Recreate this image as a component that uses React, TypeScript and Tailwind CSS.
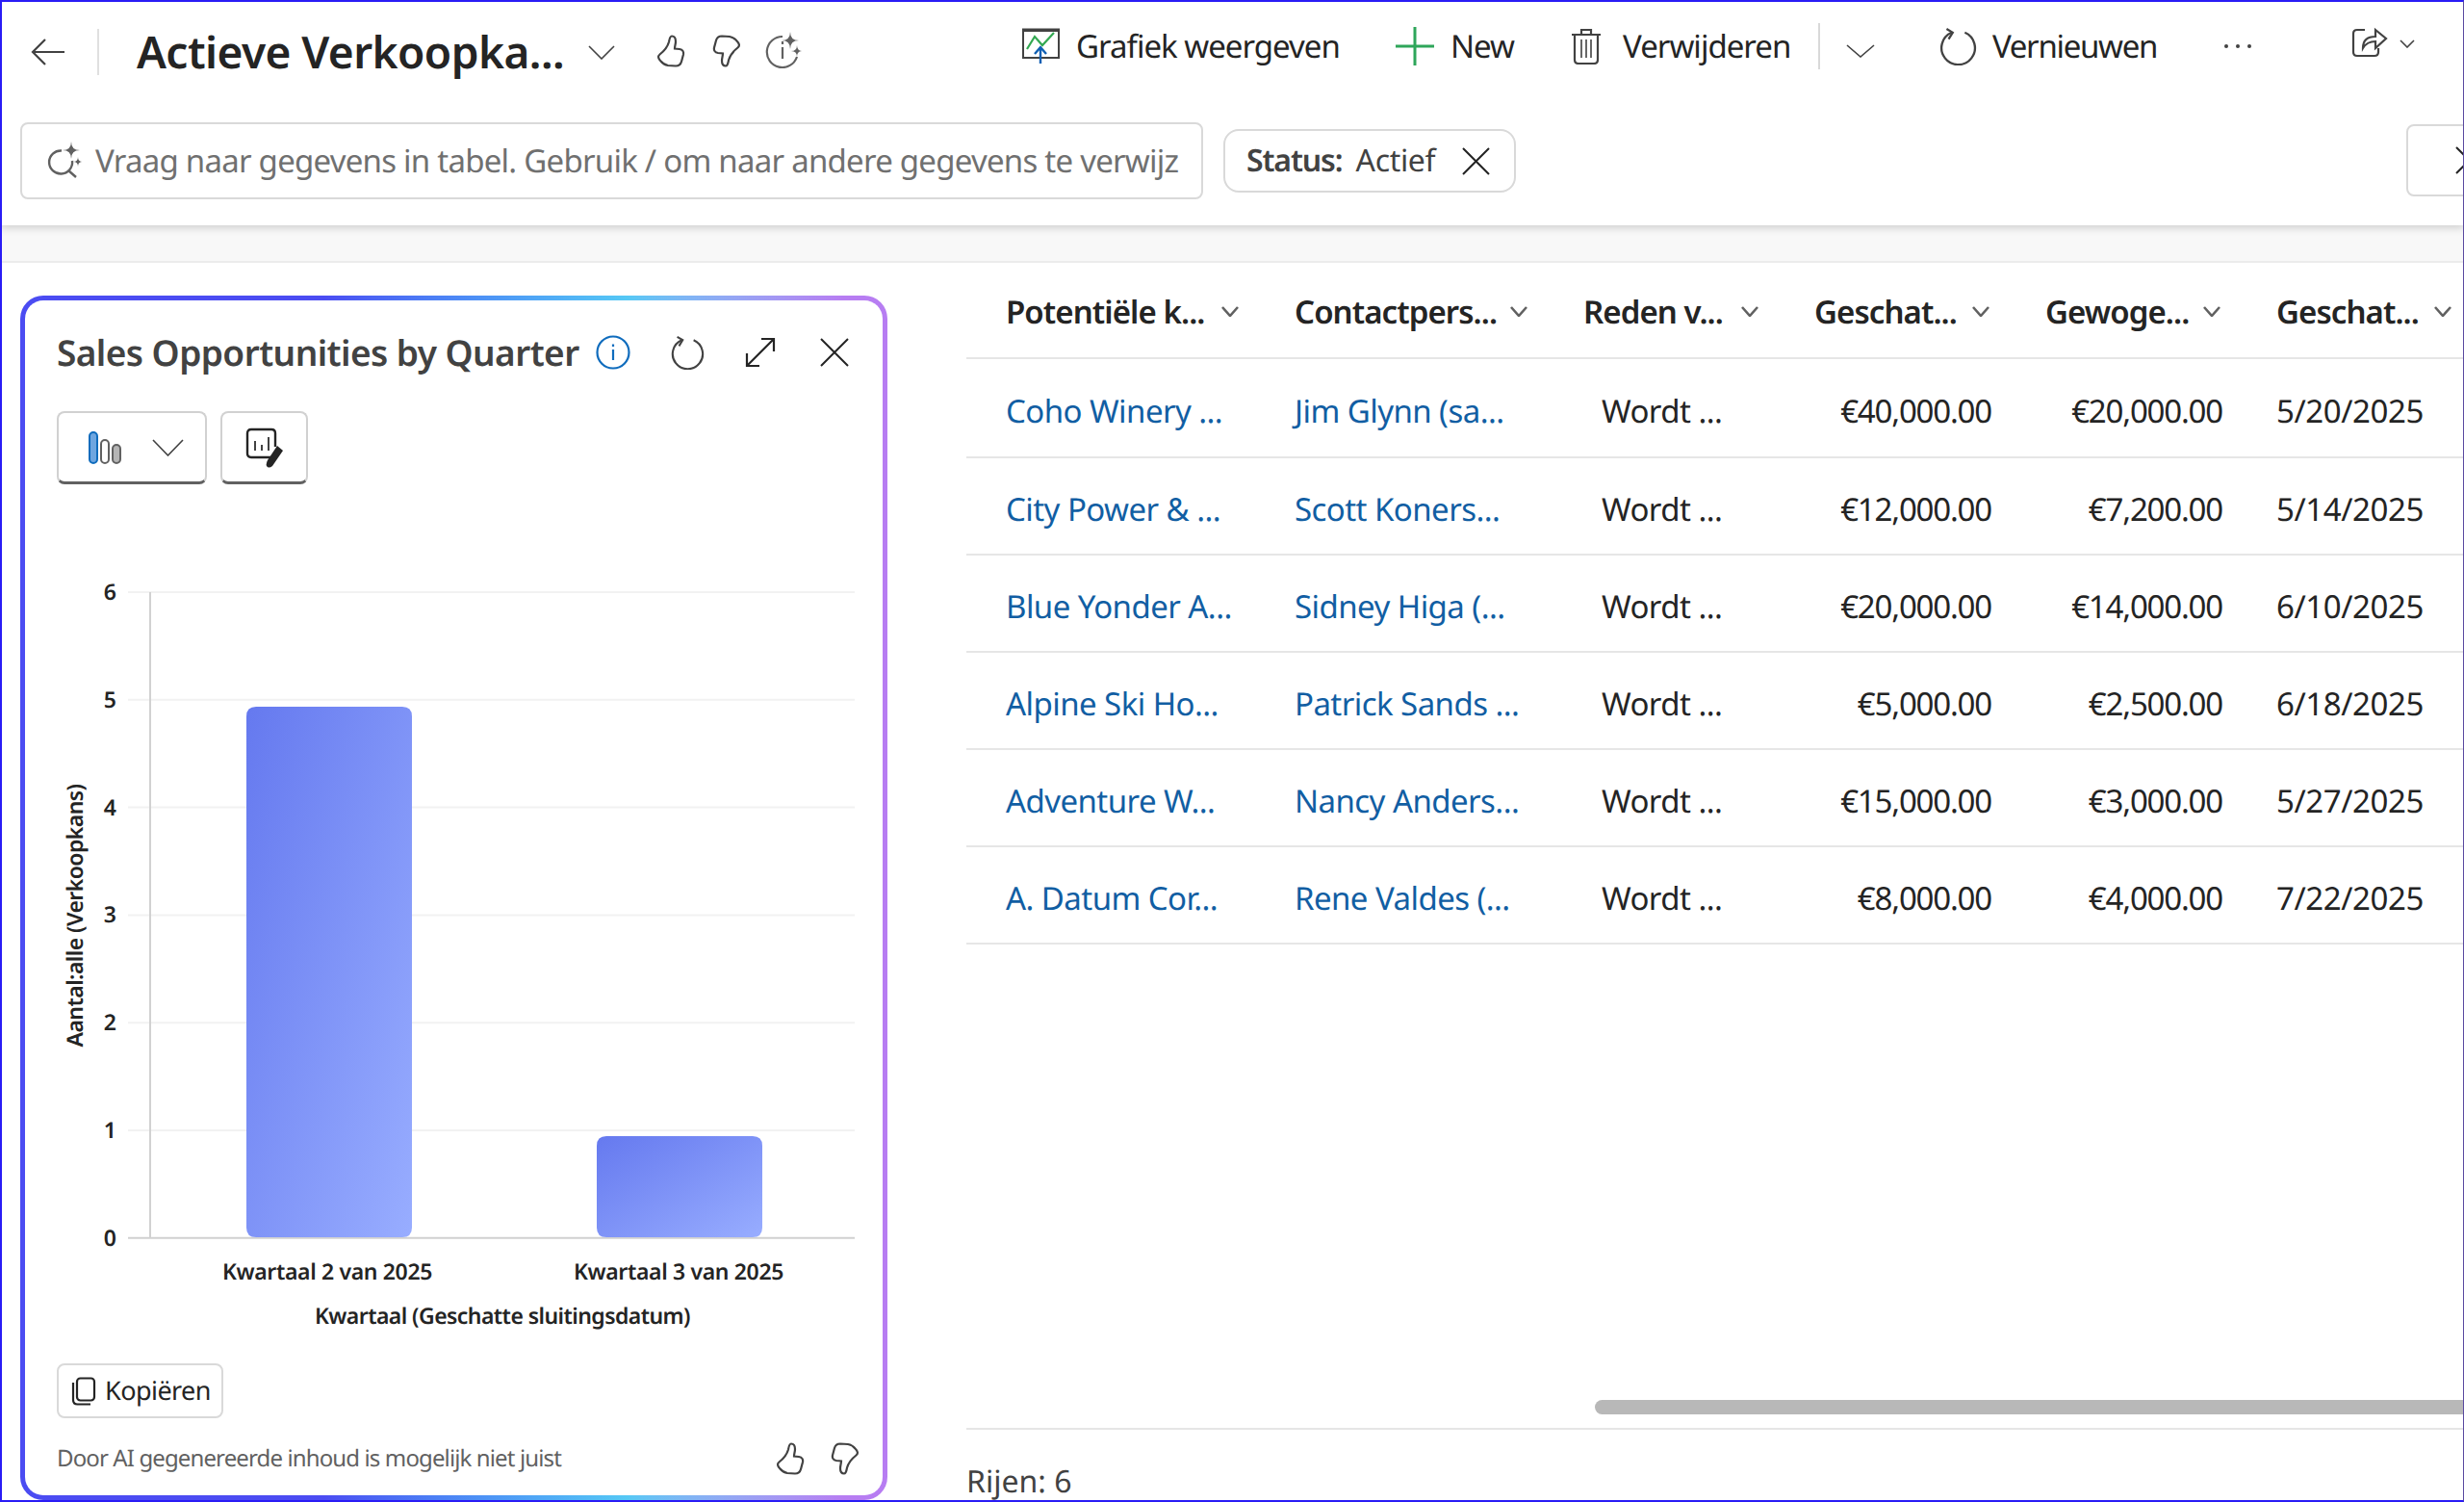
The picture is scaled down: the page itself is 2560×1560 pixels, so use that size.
import { ReactNode } from 'react';

const rows = [
    ['Coho Winery ...', 'Jim Glynn (sa...', '€40,000.00', '€20,000.00', '5/20/2025'],
    ['City Power & ...', 'Scott Koners...', '€12,000.00', '€7,200.00', '5/14/2025'],
    ['Blue Yonder A...', 'Sidney Higa (...', '€20,000.00', '€14,000.00', '6/10/2025'],
    ['Alpine Ski Ho...', 'Patrick Sands ...', '€5,000.00', '€2,500.00', '6/18/2025'],
    ['Adventure W...', 'Nancy Anders...', '€15,000.00', '€3,000.00', '5/27/2025'],
    ['A. Datum Cor...', 'Rene Valdes (...', '€8,000.00', '€4,000.00', '7/22/2025'],
];

const columns = ['Potentiële k...', 'Contactpers...', 'Reden v...', 'Geschat...', 'Gewoge...', 'Geschat...'];

const star = (x: number, y: number, r: number) =>
    `M${x} ${y - r}Q${x} ${y} ${x + r} ${y}Q${x} ${y} ${x} ${y + r}Q${x} ${y} ${x - r} ${y}Q${x} ${y} ${x} ${y - r}Z`;

const Chevron = ({ w, h, stroke = 1.6, color = '#424242' }: { w: number; h: number; stroke?: number; color?: string }) => (
    <svg width={w} height={h} viewBox={`0 0 ${w} ${h}`} fill="none" stroke={color} strokeWidth={stroke} className="shrink-0">
        <path d={`M1 1L${w / 2} ${h - 1}L${w - 1} 1`} />
    </svg>
);

const Close = ({ size, stroke = 2 }: { size: number; stroke?: number }) => (
    <svg width={size} height={size} viewBox={`0 0 ${size} ${size}`} fill="none" stroke="#242424" strokeWidth={stroke} className="shrink-0">
        <path d={`M1 1L${size - 1} ${size - 1}M${size - 1} 1L1 ${size - 1}`} />
    </svg>
);

const ThumbUp = ({ down = false }: { down?: boolean }) => (
    <svg width="30" height="34" viewBox="0 0 30 34" fill="none" stroke="#424242" strokeWidth="2.2" className={down ? 'shrink-0 rotate-180' : 'shrink-0'}>
        <path d="M16 1.5C19 1.5 20 4 20 7C20 10 19 12 19 14.5L24 15C27.5 15.5 28.5 18 28 20.5L26 28C25 31.5 23 32.5 20 32.5L12 32C9 31.5 6.5 30 4.5 27.5C2 25 1 22.5 3.5 20.5C8 17 11.5 13 13 7.5C13.5 4.5 14 1.5 16 1.5Z" />
    </svg>
);

const Refresh = ({ size }: { size: number }) => (
    <svg width={size} height={size} viewBox="0 0 38 38" fill="none" stroke="#424242" strokeWidth="2.2" className="shrink-0">
        <path d="M13 5.5A16.5 16.5 0 1 0 26 5.5" />
        <path d="M8 2L14 5.5L10 12" />
    </svg>
);

const ToolItem = ({ width, icon, label }: { width: string; icon: ReactNode; label: string }) => (
    <div className={`flex items-center ${width}`}>
        {icon}
        <span className="text-[33px] whitespace-nowrap tracking-[-0.03em] text-[#242424]">{label}</span>
    </div>
);

const ChartPanel = () => (
    <div className="ml-[21px] mt-[34px] h-[1251px] w-[901px] shrink-0 rounded-[24px] bg-linear-to-r from-[#4b4cf2] from-35% via-[#55c8f5] via-70% to-[#b77df2] to-95% p-[5px]">
        <div className="flex h-full flex-col rounded-[19px] bg-white pl-[33px]">
            <div className="mt-[26px] flex h-[56px] items-center">
                <span className="w-[560px] whitespace-nowrap text-[37px] font-semibold text-[#424242]">Sales Opportunities by Quarter</span>
                <svg width="36" height="36" viewBox="0 0 36 36" fill="none" stroke="#0f6cbd" strokeWidth="2.2" className="shrink-0">
                    <circle cx="18" cy="18" r="16.5" />
                    <path d="M18 15V26M18 9.5V12" />
                </svg>
                <div className="ml-[41px]"><Refresh size={36} /></div>
                <svg width="32" height="32" viewBox="0 0 32 32" fill="none" stroke="#242424" strokeWidth="2.2" className="ml-[42px] shrink-0">
                    <path d="M2 30L30 2M17 2H30V15M2 17V30H15" />
                </svg>
                <div className="ml-[46px]"><Close size={30} /></div>
            </div>
            <div className="mt-[33px] flex gap-[14px]">
                <div className="flex h-[76px] w-[156px] items-center rounded-[8px] border-2 border-[#d1d1d1] border-b-[3px] border-b-[#616161] pl-[31px]">
                    <svg width="34" height="34" viewBox="0 0 34 34" className="shrink-0">
                        <rect x="1" y="1" width="8" height="32" rx="4" fill="#6ea6e0" stroke="#0f6cbd" strokeWidth="2" />
                        <rect x="13" y="9" width="8" height="24" rx="4" fill="none" stroke="#616161" strokeWidth="2" />
                        <rect x="25" y="14" width="8" height="19" rx="4" fill="#b5b5b5" stroke="#616161" strokeWidth="2" />
                    </svg>
                    <div className="ml-[32px]"><Chevron w={33} h={18} /></div>
                </div>
                <div className="flex h-[76px] w-[91px] items-center justify-center rounded-[8px] border-2 border-[#d1d1d1] border-b-[3px] border-b-[#616161]">
                    <svg width="40" height="42" viewBox="0 0 40 42" fill="none" className="shrink-0">
                        <path d="M26 31H6Q2 31 2 27V6Q2 2 6 2H27Q31 2 31 6V20" stroke="#242424" strokeWidth="2.4" />
                        <path d="M10 14V24M17 18V24M24 10V24" stroke="#424242" strokeWidth="2" />
                        <path d="M33 19L39 24L28 40Q24 43 22 40Q21 38 23 34Z" fill="#242424" />
                    </svg>
                </div>
            </div>
            <BarChart />
            <div className="mt-[17px] flex h-[57px] w-[173px] items-center rounded-[8px] border-2 border-[#d9d9d9] pl-[13px]">
                <svg width="26" height="30" viewBox="0 0 26 30" fill="none" stroke="#242424" strokeWidth="2.2" className="shrink-0">
                    <rect x="6" y="1.5" width="18" height="23" rx="3.5" />
                    <path d="M2 6V24Q2 28.5 6.5 28.5H20" />
                </svg>
                <span className="ml-[9px] text-[27px] text-[#242424]">Kopiëren</span>
            </div>
            <div className="mt-[24px] flex items-center">
                <span className="w-[747px] whitespace-nowrap text-[24px] tracking-[-0.0365em] text-[#616161]">Door AI gegenereerde inhoud is mogelijk niet juist</span>
                <ThumbUp />
                <div className="ml-[27px]"><ThumbUp down /></div>
            </div>
        </div>
    </div>
);

const BarChart = () => {
    const ticks = [6, 5, 4, 3, 2, 1, 0];
    return (
        <svg width="859" height="840" viewBox="59 560 859 840" className="mt-[56px] block shrink-0">
            <defs>
                <linearGradient id="bar" x1="0" y1="0" x2="1" y2="1">
                    <stop offset="0" stopColor="#6579ef" />
                    <stop offset="1" stopColor="#98adff" />
                </linearGradient>
            </defs>
            {ticks.map((t, i) => (
                <g key={t}>
                    <line x1="133" x2="888" y1={616 + i * 111.8} y2={616 + i * 111.8} stroke={t === 0 ? '#d1d1d1' : '#f2f2f2'} strokeWidth="2" />
                    <text x="114" y={624 + i * 111.8} textAnchor="middle" fontSize="23" fontWeight="600" className="fill-[#242424]">{t}</text>
                </g>
            ))}
            <line x1="156" x2="156" y1="616" y2="1287" stroke="#d1d1d1" strokeWidth="2" />
            <path d="M256 745Q256 735 266 735H418Q428 735 428 745V1276Q428 1286 418 1286H266Q256 1286 256 1276Z" fill="url(#bar)" />
            <path d="M620 1191Q620 1181 630 1181H782Q792 1181 792 1191V1276Q792 1286 782 1286H630Q620 1286 620 1276Z" fill="url(#bar)" />
            <text x="340" y="1330" textAnchor="middle" fontSize="23" fontWeight="600" className="fill-[#242424] tracking-[-0.015em]">Kwartaal 2 van 2025</text>
            <text x="705" y="1330" textAnchor="middle" fontSize="23" fontWeight="600" className="fill-[#242424] tracking-[-0.015em]">Kwartaal 3 van 2025</text>
            <text x="522" y="1376" textAnchor="middle" fontSize="23" fontWeight="600" className="fill-[#242424]">Kwartaal (Geschatte sluitingsdatum)</text>
            <text x="0" y="0" transform="translate(86 952) rotate(-90)" textAnchor="middle" fontSize="23" fontWeight="600" className="fill-[#242424]">Aantal:alle (Verkoopkans)</text>
        </svg>
    );
};

const DataTable = () => (
    <div className="ml-[82px] mt-[3px] flex min-w-0 flex-1 flex-col overflow-hidden">
        <div className="grid h-[97px] w-[1700px] shrink-0 grid-cols-[300px_300px_240px_240px_240px_240px] items-center border-b-2 border-[#e6e6e6] pl-[41px]">
            {columns.map((c, i) => (
                <div key={i} className="flex items-center justify-between pr-[58px]">
                    <span className="whitespace-nowrap text-[33px] font-semibold tracking-[-0.028em] text-[#242424]">{c}</span>
                    <Chevron w={18} h={11} stroke={2.6} color="#616161" />
                </div>
            ))}
        </div>
        {rows.map((r, i) => (
            <div key={r[0]} className={`grid w-[1700px] shrink-0 grid-cols-[300px_300px_240px_240px_240px_240px] items-center border-b-2 border-[#e6e6e6] pl-[41px] pt-[6px] text-[33px] text-[#242424] ${i === 0 ? 'h-[103px]' : 'h-[101px]'}`}>
                <span className="whitespace-nowrap text-[#115ea3]">{r[0]}</span>
                <span className="whitespace-nowrap text-[#115ea3]">{r[1]}</span>
                <span className="whitespace-nowrap pl-[19px]">Wordt ...</span>
                <span className="whitespace-nowrap pr-[56px] text-right tracking-[-0.036em]">{r[2]}</span>
                <span className="whitespace-nowrap pr-[56px] text-right tracking-[-0.036em]">{r[3]}</span>
                <span className="whitespace-nowrap tracking-[-0.013em]">{r[4]}</span>
            </div>
        ))}
        <div className="mt-[473px] ml-[653px] h-[15px] shrink-0 rounded-l-full bg-[#b8b8b8]" />
        <div className="mt-[14px] shrink-0 border-t-2 border-[#e6e6e6] pt-[32px] text-[32px] leading-[44px] tracking-normal text-[#424242]">Rijen: 6</div>
    </div>
);

export default function App() {
    return (
        <div className="relative flex h-[1560px] w-[2560px] flex-col overflow-hidden bg-white font-['Noto_Sans',sans-serif] tracking-[-0.035em] [text-rendering:geometricPrecision]">
            <header className="relative z-10 h-[234px] shrink-0 bg-white shadow-[0_3px_8px_rgba(0,0,0,0.16)]">
                <div className="flex h-[108px] items-center">
                    <div className="flex w-[1061px] shrink-0 items-center pl-[32px]">
                        <svg width="36" height="30" viewBox="0 0 36 30" fill="none" stroke="#424242" strokeWidth="2.2" className="shrink-0">
                            <path d="M35 15H2M15 2L2 15L15 28" />
                        </svg>
                        <div className="ml-[33px] h-[48px] w-[2px] bg-[#e0e0e0]" />
                        <span className="ml-[39px] w-[469px] whitespace-nowrap text-[46px] font-semibold text-[#242424]">Actieve Verkoopka...</span>
                        <Chevron w={28} h={15} />
                        <div className="mb-[3px] ml-[43px]"><ThumbUp /></div>
                        <div className="mb-[3px] ml-[28px]"><ThumbUp down /></div>
                        <svg width="38" height="38" viewBox="0 0 38 38" fill="none" stroke="#616161" strokeWidth="2.2" className="mb-[4px] ml-[25px] shrink-0">
                            <path d="M18 5A16 16 0 1 0 33 26" />
                            <path d="M18 16V28M18 10V13" />
                            <path d={star(26, 9, 9)} fill="#616161" stroke="none" />
                            <path d={star(33, 20, 6)} fill="#616161" stroke="none" />
                        </svg>
                    </div>
                    <div className="flex flex-1 items-center pb-[12px]">
                        <ToolItem
                            width="w-[389px]"
                            label="Grafiek weergeven"
                            icon={
                                <svg width="41" height="38" viewBox="0 0 41 38" fill="none" className="mr-[16px] shrink-0">
                                    <path d="M2 3V31H39V3Z" stroke="#424242" strokeWidth="2" />
                                    <path d="M1 2H40" stroke="#424242" strokeWidth="3" />
                                    <path d="M6 22L14 9L22 18L34 5" stroke="#33a852" strokeWidth="2.2" />
                                    <path d="M20 37V20M14 27L20 20L26 27" stroke="#0f5fb3" strokeWidth="2.4" />
                                </svg>
                            }
                        />
                        <ToolItem
                            width="w-[182px]"
                            label="New"
                            icon={
                                <svg width="40" height="40" viewBox="0 0 40 40" fill="none" stroke="#2ea65a" strokeWidth="3" className="mr-[17px] shrink-0">
                                    <path d="M20 0V40M0 20H40" />
                                </svg>
                            }
                        />
                        <ToolItem
                            width="w-[257px]"
                            label="Verwijderen"
                            icon={
                                <svg width="32" height="38" viewBox="0 0 32 38" fill="none" stroke="#424242" strokeWidth="2.2" className="mr-[22px] shrink-0">
                                    <path d="M1 7H31M11 7V2H21V7M4 7V33Q4 37 8 37H24Q28 37 28 33V7" />
                                    <path d="M11 12V31M16 12V31M21 12V31" strokeWidth="1.6" />
                                </svg>
                            }
                        />
                        <div className="h-[48px] w-[2px] bg-[#d9d9d9]" />
                        <div className="ml-[27px] mt-[10px]"><Chevron w={30} h={14} /></div>
                        <div className="ml-[66px]"><Refresh size={40} /></div>
                        <span className="ml-[16px] w-[241px] whitespace-nowrap text-[33px] tracking-[-0.04em] text-[#242424]">Vernieuwen</span>
                        <div className="flex gap-[8px]">
                            <div className="h-[4px] w-[4px] rounded-full bg-[#424242]" />
                            <div className="h-[4px] w-[4px] rounded-full bg-[#424242]" />
                            <div className="h-[4px] w-[4px] rounded-full bg-[#424242]" />
                        </div>
                        <svg width="38" height="34" viewBox="0 0 38 34" fill="none" stroke="#424242" strokeWidth="2.2" className="ml-[104px] mb-[10px] shrink-0">
                            <path d="M14 5H6Q2 5 2 9V28Q2 32 6 32H24Q28 32 28 28V24" />
                            <path d="M12 24C12 15 18 12 25 12V5L36 14L25 24V17C20 17 15 19 12 24Z" />
                        </svg>
                        <div className="ml-[12px] mb-[6px]"><Chevron w={16} h={9} /></div>
                    </div>
                </div>
                <div className="flex items-start pl-[21px] pt-[19px]">
                    <div className="flex h-[80px] w-[1229px] shrink-0 items-center overflow-hidden rounded-[8px] border-2 border-[#d9d9d9] pl-[26px]">
                        <svg width="36" height="38" viewBox="0 0 36 38" fill="none" stroke="#616161" strokeWidth="2.4" className="mb-[3px] shrink-0">
                            <path d="M15 9.5A12 12 0 1 0 26 20M22 30L30 37" />
                            <path d={star(25, 9, 9)} fill="#616161" stroke="none" />
                            <path d={star(32, 21, 5)} fill="#616161" stroke="none" />
                        </svg>
                        <span className="ml-[14px] whitespace-nowrap text-[33px] tracking-[-0.023em] text-[#707070]">Vraag naar gegevens in tabel. Gebruik / om naar andere gegevens te verwijz</span>
                    </div>
                    <div className="ml-[21px] mt-[7px] flex h-[66px] w-[304px] shrink-0 items-center rounded-[16px] border-2 border-[#d9d9d9] pl-[22px]">
                        <span className="text-[32px] font-semibold tracking-[-0.035em] text-[#424242]">Status:</span>
                        <span className="ml-[14px] w-[110px] text-[32px] tracking-[-0.01em] text-[#424242]">Actief</span>
                        <Close size={29} />
                    </div>
                    <div className="ml-[925px] mt-[2px] flex h-[75px] w-[120px] shrink-0 items-center rounded-[8px] border-2 border-[#d9d9d9] pl-[49px]">
                        <Close size={29} />
                    </div>
                </div>
            </header>
            <div className="h-[39px] shrink-0 border-b-2 border-[#ececec] bg-[#f8f8f8]" />
            <main className="flex min-h-0 flex-1">
                <ChartPanel />
                <DataTable />
            </main>
            <div className="pointer-events-none absolute inset-0 z-20 border-2 border-r border-[#2a1cf5] border-r-[#5a4aa0]" />
        </div>
    );
}
